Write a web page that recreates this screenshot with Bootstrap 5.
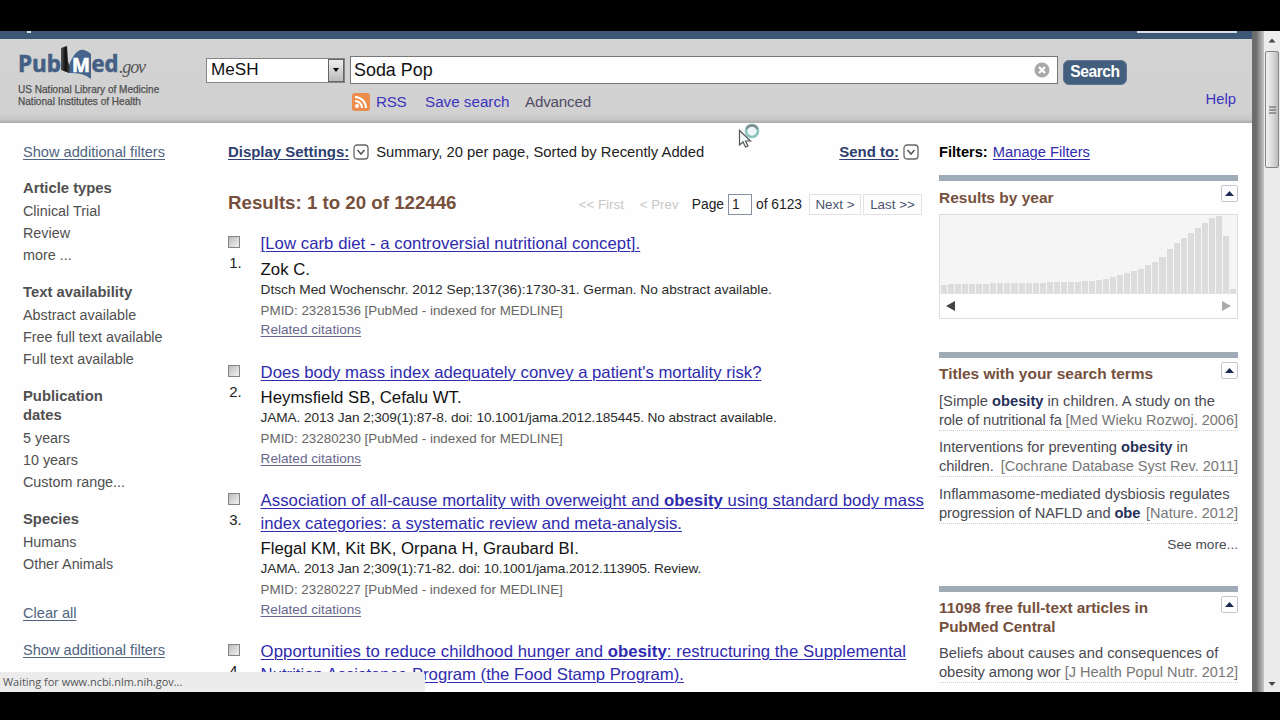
<!DOCTYPE html>
<html lang="en"><head><meta charset="utf-8"><title>Soda Pop - PubMed</title>
<link href="https://cdn.jsdelivr.net/npm/bootstrap@5.3.0/dist/css/bootstrap.min.css" rel="stylesheet">
<style>
html,body{height:720px;overflow:hidden}
body{font-family:"Liberation Sans",Arial,sans-serif;background:#000;color:#222;font-size:15px;line-height:20px;white-space:nowrap}
a,u{text-decoration-thickness:1px;text-underline-offset:1.5px}
a{color:#2f2aae}
h5,h6,p{margin:0}
.shell{height:661px;margin-top:31px;background:#fefefe;position:relative;overflow:hidden}
.page-col{width:1252px}
.topbar{height:8px;background:#3d5875;padding:0 15px 0 27px}
.topbar i{height:2px;background:#d5dde6}
.masthead{height:84px;background:linear-gradient(#d3d3d3,#d1d1d1 88%,#c6c6c6 96%,#a9a9a9);padding:0 16px 0 18px}
.logo-col{width:188px;padding-top:6px}
.nlm{font-size:10.05px;line-height:12px;color:#505050;-webkit-text-stroke:.25px #505050;margin-top:1px}
.db-select{width:139px;height:25px;margin-top:19px;border:1px solid #858585;background:#fff;font-size:17.1px;line-height:22px;color:#111;padding-left:4px}
.db-select>span:first-child{margin-top:-2px}
.arrow{width:16px;height:23px;border:1px solid #666;background:linear-gradient(#eee,#bbb)}
.query{padding-top:17px;margin-left:5px}
.term{width:708px;height:28px;border:1px solid #777;background:#fefefe;font-size:17.9px;color:#111;padding:0 7px 0 3px}
.go{width:64px;height:25px;margin:4px 0 0 5px;padding-bottom:1px;background:#445f7e;border:1px solid #5e7590;border-radius:6px;color:#fff;font-weight:700;font-size:15.6px;letter-spacing:-.45px}
.quick{font-size:15.2px;line-height:20px;margin:7px 0 0 2px}
.quick a{color:#3b34bd}
.quick a.adv{color:#514b66}
.filters{width:228px;padding:19px 0 0 23px;color:#505050}
.filters a{color:#4e6480;font-size:14.6px;display:block;line-height:20px}
.filters p{font-size:14.35px;line-height:22.4px}
.filters h6{font-size:14.8px;font-weight:700;line-height:19px;margin:15.8px 0 2px}
.filters h6.first-group{margin-top:16.6px}
.results{width:696px;padding-top:19px}
.head-link{font-weight:700;color:#2d406f;font-size:14.95px}
.summ{font-size:14.77px;margin-left:7px}
.hd{color:#75503c;font-weight:700}
.count-row{height:24px;margin:29px 0 18px}
.count-row h5{font-size:18.7px;line-height:24px}
.pager{font-size:13.8px;line-height:19px;margin:2px 2px 0 0}
.off{color:#c8c8c8;font-size:13.3px}
.pbtn{border:1px solid #e2e2e2;height:21px;color:#49536e;text-align:center;font-size:13.4px}
.pg{width:24px;height:21px;border:1px solid #8890a0;padding-left:3px;margin:0 4px}
.hit{margin-bottom:23.5px}
.num{width:32.6px;font-size:15px;padding-top:3px}
.cb{width:12px;height:12px;border:1px solid #858585;background:linear-gradient(135deg,#bbb,#f2f2f2);margin-bottom:5px}
.ttl{font-size:16.72px;line-height:22.5px;padding-bottom:3px}
.auth{font-size:16.75px;line-height:21px;color:#111}
.src{font-size:13.68px;line-height:20px;color:#2b2b2b}
.src.doi{letter-spacing:-.11px}
.pmid{font-size:13.37px;line-height:21.5px;color:#666}
.rel{font-size:13.6px;line-height:17px}
.rel a{color:#68688e}
.side{width:299px;margin-left:15px;padding-top:19px;font-size:14.7px;line-height:19px;color:#4a4a52}
.bar{height:6px;background:#a0abb8}
.side h5{font-size:15.5px;line-height:19px}
.tog{width:17px;height:17px;border:1px solid #c3c8d0;border-radius:2px;margin-top:4px}
.chart{height:105px;border:1px solid #ddd}
.plot{height:79px;background:#f5f5f5;gap:1px;padding:0 1px;border-bottom:1px solid #e2e2e2}
.plot i{flex:1 1 0;background:#dcdcdc}
.cite{border-bottom:1px dotted #ccc;height:39px;margin-bottom:7.5px}
.cite b{color:#26305a}
.cite .j{color:#777;font-size:14.5px}
.cite .lead-in{letter-spacing:-.1px}
.edge{width:12px;background:linear-gradient(90deg,#6c6c6c 0 35%,#8f8f8f 60%,#c5c5c5)}
.sbar{width:16px;background:#ececec;padding:7px 1px 5px}
.thumb{height:117px;border:1px solid #858585;border-radius:2px;background:linear-gradient(90deg,#f2f2f2,#dcdcdc 50%,#bcbcbc)}
.status{position:absolute;left:0;bottom:0;width:425px;height:20px;background:#ececec;border-top-right-radius:4px;font:10.95px/20px "Open Sans",sans-serif;color:#555;padding-left:3px}
.cursor{position:absolute;left:736px;top:90px}
</style></head><body>
<div class="shell d-flex">
<div class="page-col flex-shrink-0">
<div class="topbar d-flex justify-content-between"><i style="width:4px"></i><i style="width:100px"></i></div>
<header class="masthead d-flex">
<div class="logo-col flex-shrink-0">
<svg width="132" height="38" class="d-block" viewBox="0 0 132 38"><defs><linearGradient id="bk"><stop offset="0" stop-color="#555"/><stop offset=".5" stop-color="#111"/><stop offset="1" stop-color="#444"/></linearGradient></defs>
<g font-family="Open Sans" font-weight="700" font-size="23.5" fill="#445f84" stroke="#445f84" stroke-width=".6"><text x="0" y="27" textLength="43" lengthAdjust="spacingAndGlyphs">Pub</text><text x="73.500" y="27" textLength="27" lengthAdjust="spacingAndGlyphs">ed</text></g>
<path d="M49 27C53 11 60 3 66 5q4 1 7 4v25q-8-7-22-6z" fill="#46648c"/><path d="M43 3l6-2 1 15 2 7-1 5-8-3z" fill="url(#bk)"/>
<text x="54" y="26.500" font-family="Open Sans" font-weight="700" font-size="19" fill="#fff" stroke="#fff" stroke-width=".6" textLength="18" lengthAdjust="spacingAndGlyphs">M</text><text x="101" y="28" font-family="Liberation Serif" font-style="italic" font-size="18" fill="#555" textLength="27">.gov</text></svg>
<div class="nlm">US National Library of Medicine<br>National Institutes of Health</div></div>
<div class="db-select d-flex align-items-center justify-content-between flex-shrink-0"><span>MeSH</span><span class="arrow d-flex align-items-center justify-content-center"><svg width="8" height="5"><path d="M1 0h6L4 4z"/></svg></span></div>
<div class="query"><div class="d-flex"><div class="term d-flex align-items-center justify-content-between"><span>Soda Pop</span><svg width="16" height="16"><circle cx="8" cy="8" r="7.500" fill="#a8a8a8"/><path d="M5 5l6 6m0-6l-6 6" stroke="#fff" stroke-width="2.400"/></svg></div><div class="go d-flex align-items-center justify-content-center">Search</div></div>
<div class="quick d-flex"><svg width="18" height="18" style="margin:1px 6px 0 0"><rect width="18" height="18" rx="3" fill="#ec8d4b"/><circle cx="5" cy="13" r="2" fill="#fff"/><path d="M3 8a7 7 0 017 7M3 4a11 11 0 0111 11" fill="none" stroke="#fff" stroke-width="2"/></svg><a href="#" class="text-decoration-none" style="width:49px;letter-spacing:-.3px">RSS</a><a href="#" class="text-decoration-none" style="width:100px">Save search</a><a href="#" class="adv text-decoration-none" style="letter-spacing:-.2px">Advanced</a></div></div>
<div class="quick ms-auto" style="padding-top:43px;font-size:14.8px"><a href="#" class="text-decoration-none">Help</a></div>
</header>
<main class="d-flex">
<nav class="filters flex-shrink-0"><a href="#">Show additional filters</a>
<h6 class="first-group">Article types</h6><p>Clinical Trial</p><p>Review</p><p>more ...</p>
<h6>Text availability</h6><p>Abstract available</p><p>Free full text available</p><p>Full text available</p>
<h6>Publication<br>dates</h6><p>5 years</p><p>10 years</p><p>Custom range...</p>
<h6>Species</h6><p>Humans</p><p>Other Animals</p>
<a href="#" style="margin:28px 0 17px">Clear all</a><a href="#">Show additional filters</a></nav>
<div class="results flex-shrink-0">
<div class="d-flex align-items-center"><u class="head-link me-1">Display Settings:</u><svg width="16" height="16"><rect x="1" y="1" width="14" height="14" rx="3" fill="none" stroke="#666" stroke-width="1.300"/><path d="M4.500 6L8 10l3.500-4" fill="none" stroke="#555" stroke-width="1.500"/></svg><span class="summ">Summary, 20 per page, Sorted by Recently Added</span>
<u class="head-link ms-auto me-1">Send to:</u><svg width="16" height="16" style="margin-right:5px"><rect x="1" y="1" width="14" height="14" rx="3" fill="none" stroke="#666" stroke-width="1.300"/><path d="M4.500 6L8 10l3.500-4" fill="none" stroke="#555" stroke-width="1.500"/></svg></div>
<div class="count-row d-flex justify-content-between"><h5 class="hd">Results: 1 to 20 of 122446</h5>
<div class="pager d-flex align-items-center"><span class="off" style="width:61px">&lt;&lt; First</span><span class="off" style="width:52px">&lt; Prev</span><span>Page</span><span class="pg">1</span><span style="width:53px">of 6123</span><span class="pbtn" style="width:52px">Next &gt;</span><span class="pbtn" style="width:59px;margin-left:2px">Last &gt;&gt;</span></div></div>
<article class="hit d-flex"><div class="num"><div class="cb"></div>&#8202;1.</div><div><div class="ttl" style="letter-spacing:.05px"><a href="#">[Low carb diet - a controversial nutritional concept].</a></div><div class="auth">Zok C.</div><div class="src">Dtsch Med Wochenschr. 2012 Sep;137(36):1730-31. German. No abstract available.</div><div class="pmid">PMID: 23281536 [PubMed - indexed for MEDLINE]</div><div class="rel"><a href="#">Related citations</a></div></div></article>
<article class="hit d-flex"><div class="num"><div class="cb"></div>&#8202;2.</div><div><div class="ttl"><a href="#">Does body mass index adequately convey a patient's mortality risk?</a></div><div class="auth">Heymsfield SB, Cefalu WT.</div><div class="src doi">JAMA. 2013 Jan 2;309(1):87-8. doi: 10.1001/jama.2012.185445. No abstract available.</div><div class="pmid">PMID: 23280230 [PubMed - indexed for MEDLINE]</div><div class="rel"><a href="#">Related citations</a></div></div></article>
<article class="hit d-flex"><div class="num"><div class="cb"></div>&#8202;3.</div><div><div class="ttl"><a href="#"><span style="letter-spacing:.06px">Association of all-cause mortality with overweight and <b>obesity</b> using standard body mass</span><br>index categories: a systematic review and meta-analysis.</a></div><div class="auth">Flegal KM, Kit BK, Orpana H, Graubard BI.</div><div class="src doi">JAMA. 2013 Jan 2;309(1):71-82. doi: 10.1001/jama.2012.113905. Review.</div><div class="pmid">PMID: 23280227 [PubMed - indexed for MEDLINE]</div><div class="rel"><a href="#">Related citations</a></div></div></article>
<article class="hit d-flex"><div class="num"><div class="cb"></div>&#8202;4.</div><div class="ttl"><a href="#"><span style="letter-spacing:.08px">Opportunities to reduce childhood hunger and <b>obesity</b>: restructuring the Supplemental</span><br>Nutrition Assistance Program (the Food Stamp Program).</a></div></article>
</div>
<aside class="side">
<div style="height:33px;line-height:21px"><b class="text-black" style="font-size:14.6px">Filters:</b>&nbsp; <a href="#" style="margin-left:-3px">Manage Filters</a></div>
<div class="bar"></div><div class="d-flex justify-content-between" style="height:33px"><h5 class="hd" style="padding-top:7px">Results by year</h5><div class="tog d-flex align-items-center justify-content-center"><svg width="9" height="5"><path d="M0 5h9L4.500 0z" fill="#1d2b52"/></svg></div></div>
<div class="chart"><div class="plot d-flex align-items-end" id="years"></div><div class="d-flex justify-content-between align-items-center" style="height:24px;padding:0 6px"><svg width="9" height="10"><path d="M9 0v10L0 5z" fill="#444"/></svg><svg width="9" height="10"><path d="M0 0v10l9-5z" fill="#aaa"/></svg></div></div>
<div class="bar" style="margin-top:33px"></div><div class="d-flex justify-content-between" style="height:33.5px"><h5 class="hd" style="padding-top:6px">Titles with your search terms</h5><div class="tog d-flex align-items-center justify-content-center"><svg width="9" height="5"><path d="M0 5h9L4.500 0z" fill="#1d2b52"/></svg></div></div>
<div class="cite">[Simple <b>obesity</b> in children. A study on the<div class="d-flex justify-content-between"><span class="lead-in">role of nutritional fa</span><span class="j">[Med Wieku Rozwoj. 2006]</span></div></div>
<div class="cite">Interventions for preventing <b>obesity</b> in<div class="d-flex justify-content-between"><span class="lead-in">children.</span><span class="j">[Cochrane Database Syst Rev. 2011]</span></div></div>
<div class="cite">Inflammasome-mediated dysbiosis regulates<div class="d-flex justify-content-between"><span class="lead-in">progression of NAFLD and <b>obe</b></span><span class="j">[Nature. 2012]</span></div></div>
<div class="text-end" style="padding-top:4px;font-size:13.7px">See more...</div>
<div class="bar" style="margin-top:31.5px"></div><div class="d-flex justify-content-between" style="height:52px"><h5 class="hd" style="padding-top:6px;font-size:15.3px">11098 free full-text articles in<br>PubMed Central</h5><div class="tog d-flex align-items-center justify-content-center"><svg width="9" height="5"><path d="M0 5h9L4.500 0z" fill="#1d2b52"/></svg></div></div>
<div class="cite">Beliefs about causes and consequences of<div class="d-flex justify-content-between"><span class="lead-in">obesity among wor</span><span class="j">[J Health Popul Nutr. 2012]</span></div></div>
</aside>
</main></div>
<div class="edge flex-shrink-0"></div>
<div class="sbar d-flex flex-column flex-shrink-0"><svg width="14" height="13"><path d="M3.500 4.500h7L7 0.500z" fill="#444"/></svg><div class="thumb d-flex align-items-center justify-content-center"><svg width="7" height="8"><path d="M0 1h7M0 4h7M0 7h7" stroke="#555"/></svg></div><svg width="14" height="5" class="mt-auto"><path d="M3.500 0h7L7 4z" fill="#444"/></svg></div>
<div class="status">Waiting for www.ncbi.nlm.nih.gov...</div>
<svg class="cursor" width="26" height="30"><circle cx="16" cy="10" r="6" fill="#eef6f6" stroke="#86c4bd" stroke-width="2.500"/><path d="M10.500 8a6 6 0 0111 0" fill="none" stroke="#7f9090" stroke-width="2.500"/><path d="M3.500 9.500v14.500l3.500-3 2.500 5 2.500-1-2.500-5h5z" fill="#f4fdfb" stroke="#555" stroke-width="1.200"/></svg>
</div>
<script src="https://cdn.jsdelivr.net/npm/bootstrap@5.3.0/dist/js/bootstrap.bundle.min.js"></script>
<script>
const counts=[8,9,9,9,9,9,9,10,10,10,10,10,10,10,10,11,11,11,11,11,12,12,13,14,16,18,20,22,24,28,31,36,44,50,55,60,65,70,75,77,57,4];
document.getElementById('years').innerHTML=counts.map(c=>`<i style="height:${c}px"></i>`).join('');
</script>
</body></html>
